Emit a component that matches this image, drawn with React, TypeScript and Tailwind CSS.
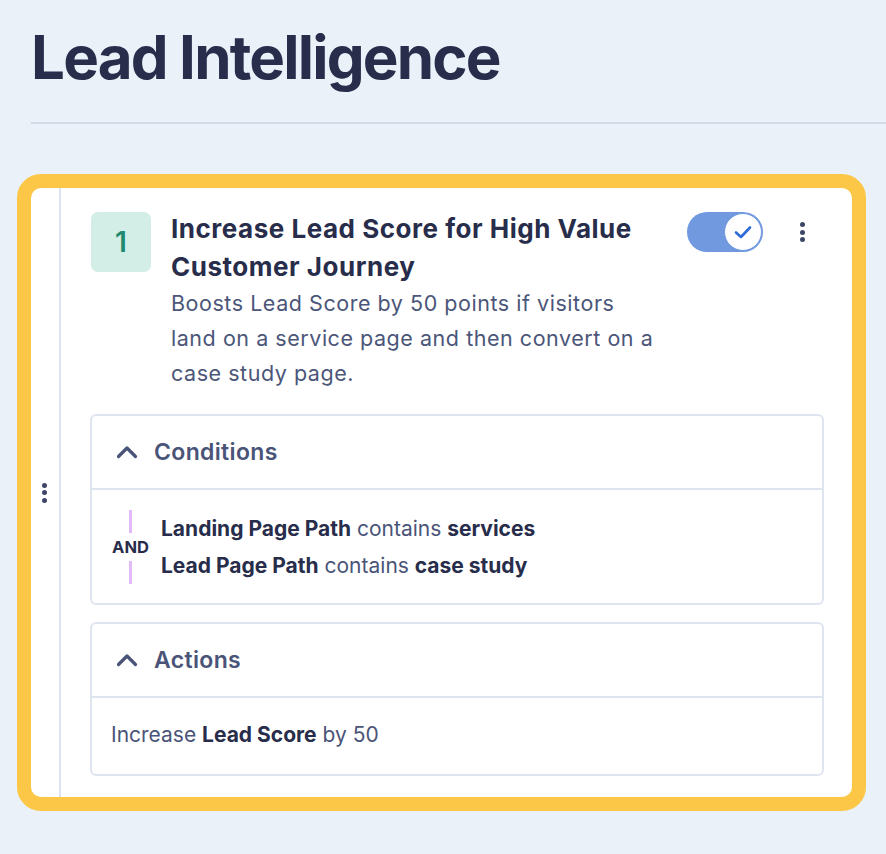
import React from "react"

const Dots = ({ className = "" }: { className?: string }) => (
  <div className={`flex flex-col items-center gap-[2.5px] ${className}`}>
    <span className="block h-[5px] w-[5px] rounded-full bg-[#3d4666]" />
    <span className="block h-[5px] w-[5px] rounded-full bg-[#3d4666]" />
    <span className="block h-[5px] w-[5px] rounded-full bg-[#3d4666]" />
  </div>
)

const Chevron = () => (
  <svg width="22" height="14" viewBox="0 0 22 14" fill="none">
    <polyline
      points="2.5,11.5 11,3 19.5,11.5"
      stroke="#4a5478"
      strokeWidth="3.2"
      strokeLinecap="round"
      strokeLinejoin="round"
    />
  </svg>
)

function Section({ title, children }: { title: string; children: React.ReactNode }) {
  return (
    <div className="rounded-[6px] border-2 border-[#dfe5ef]">
      <div className="flex h-[74px] items-center gap-[16px] border-b-2 border-[#dfe5ef] pl-[24px]">
        <Chevron />
        <span className="text-[23px] font-semibold tracking-[0.015em] text-[#4a5478]">{title}</span>
      </div>
      {children}
    </div>
  )
}

export default function App() {
  return (
    <div className="min-h-screen bg-[#eaf1f9] pt-[27px] font-['Inter',sans-serif]">
      <div className="ml-[31px]">
        <h1 className="text-[60px] leading-[60px] font-bold tracking-[-0.03em] text-[#272d4a]">
          Lead Intelligence
        </h1>
        <div className="mt-[35px] h-[2px] bg-[#d4dbe8]" />
      </div>

      <div className="ml-[17px] mt-[50px] w-[849px] rounded-[24px] border-[14px] border-[#fcc646] bg-white">
        <div className="flex min-h-[609px]">
          <div className="flex w-[30px] items-center justify-center border-r-2 border-[#dbe3ef] pr-[2px]">
            <Dots />
          </div>

          <div className="flex-1 pl-[29px] pr-[28px] pt-[24px] pb-[20px]">
            <div className="flex items-start pl-[1px]">
              <div className="flex h-[60px] w-[60px] shrink-0 items-center justify-center rounded-[7px] bg-[#d3eee6] text-[28px] font-semibold text-[#1f8a6f]">
                1
              </div>
              <div className="ml-[20px] -mt-[2px] w-[494px]">
                <h2 className="text-[26px] leading-[38px] font-bold tracking-[0.02em] text-[#272d4a]">
                  Increase Lead Score for High Value Customer Journey
                </h2>
                <p className="text-[21.5px] leading-[35px] tracking-[0.025em] text-[#4b5679]">
                  Boosts Lead Score by 50 points if visitors land on a service page and then convert on a case study page.
                </p>
              </div>
              <div className="ml-[22px] flex h-[40px] w-[76px] shrink-0 items-center justify-end rounded-full bg-[#7099e0] p-[1px]">
                <div className="flex h-[38px] w-[38px] items-center justify-center rounded-full border-[1.5px] border-[#6f98e0] bg-white">
                  <svg width="20" height="16" viewBox="0 0 20 16" fill="none">
                    <polyline
                      points="3,8.5 8,13 17,3.5"
                      stroke="#2f6bdb"
                      strokeWidth="2.6"
                      strokeLinecap="round"
                      strokeLinejoin="round"
                    />
                  </svg>
                </div>
              </div>
              <div className="flex h-[40px] flex-1 items-center justify-end pr-[19px]">
                <Dots />
              </div>
            </div>

            <div className="mt-[23px] flex flex-col gap-[17px]">
              <Section title="Conditions">
                <div className="flex items-center gap-[12px] pl-[20px] pt-[20px] pb-[19px]">
                  <div className="flex w-[37px] flex-col items-center">
                    <span className="block h-[23px] w-[3px] bg-[#e2b9f9]" />
                    <span className="text-[16.5px] leading-[28px] font-bold text-[#272d4a]">AND</span>
                    <span className="block h-[23px] w-[3px] bg-[#e2b9f9]" />
                  </div>
                  <div className="text-[21px] leading-[37px] text-[#4a5478]">
                    <div>
                      <span className="font-bold text-[#272d4a]">Landing Page Path</span> contains{" "}
                      <span className="font-bold text-[#272d4a]">services</span>
                    </div>
                    <div>
                      <span className="font-bold text-[#272d4a]">Lead Page Path</span> contains{" "}
                      <span className="font-bold text-[#272d4a]">case study</span>
                    </div>
                  </div>
                </div>
              </Section>

              <Section title="Actions">
                <div className="pl-[19px] pt-[23px] pb-[25px] text-[21px] leading-[28px] text-[#4a5478]">
                  Increase <span className="font-bold text-[#272d4a]">Lead Score</span> by 50
                </div>
              </Section>
            </div>
          </div>
        </div>
      </div>
    </div>
  )
}
